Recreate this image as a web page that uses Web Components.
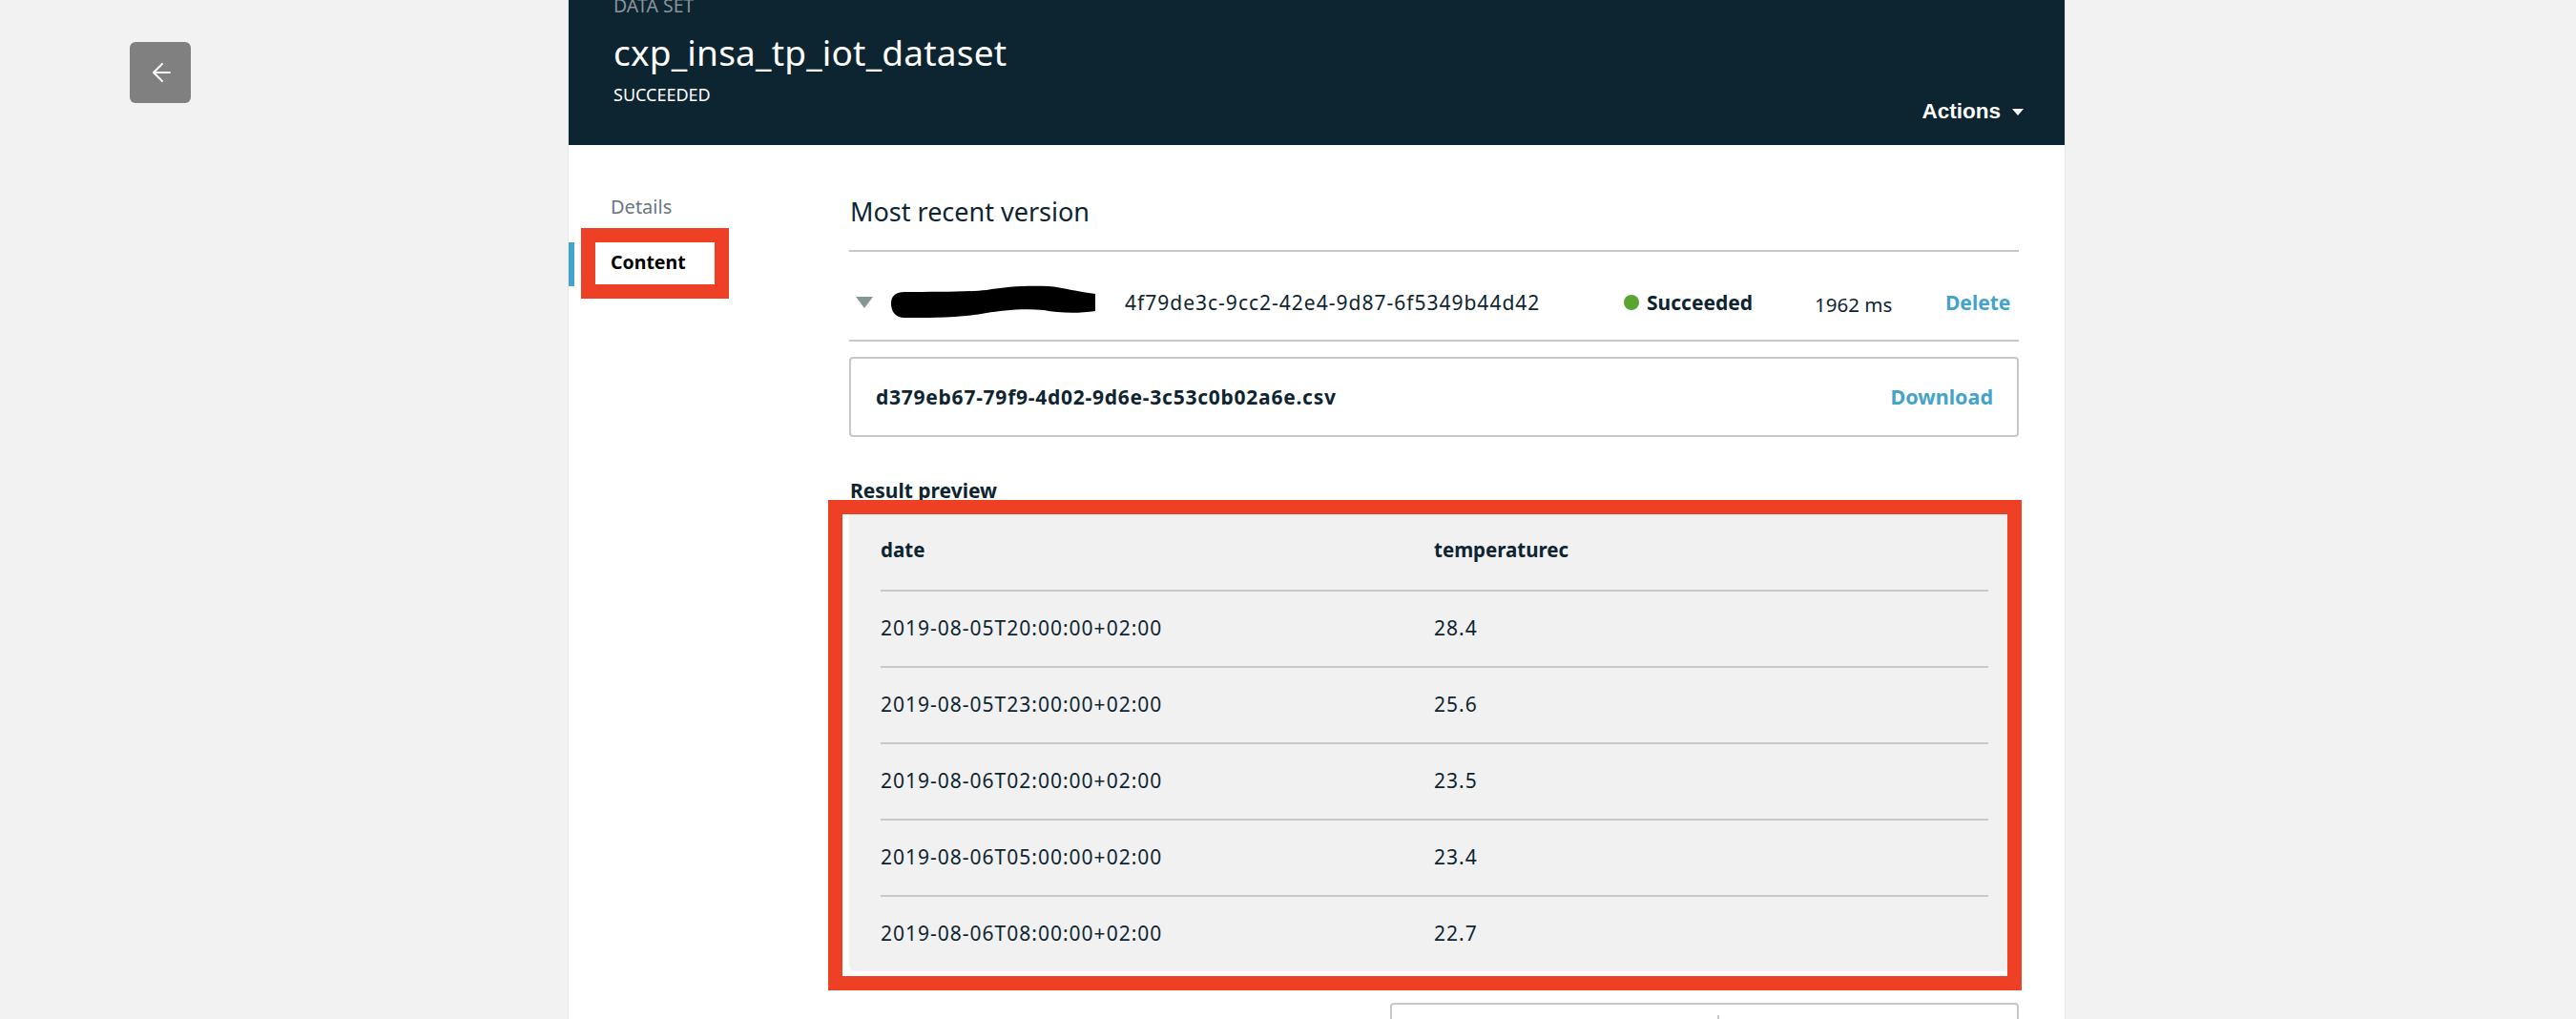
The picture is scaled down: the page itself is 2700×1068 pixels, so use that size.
<!DOCTYPE html>
<html>
<head>
<meta charset="utf-8">
<title>cxp_insa_tp_iot_dataset</title>
<style>
  html, body { margin: 0; height: 100%; overflow: hidden; background: #f2f2f2; }
  body { font-family: "Noto Sans", sans-serif; color: #0e2531; }
</style>
</head>
<body>
<dataset-page>
  <back-button slot="aside"></back-button>
  <dataset-header slot="header" label="DATA SET" name="cxp_insa_tp_iot_dataset" status="SUCCEEDED"></dataset-header>
  <side-nav slot="nav"></side-nav>
  <version-row version="4f79de3c-9cc2-42e4-9d87-6f5349b44d42" state="Succeeded" duration="1962 ms"></version-row>
  <file-row file="d379eb67-79f9-4d02-9d6e-3c53c0b02a6e.csv"></file-row>
  <result-table></result-table>
  <pager-box></pager-box>
</dataset-page>

<script>
// small helper, every element just sets its shadow markup once
class Base extends HTMLElement {
    constructor() {
        super();
        this.attachShadow({ mode: 'open' });
    }
    connectedCallback() {
        this.shadowRoot.innerHTML = this.render();
    }
}

class DatasetPage extends Base {
    render() {
        return `
            <style>
                :host { display: flex; align-items: flex-start; height: 1068px; overflow: hidden; }
                .aside { flex: 0 0 596px; }
                .panel { flex: 0 0 1568px; height: 1068px; background: #fff; box-shadow: 0 0 0 1px #e8e8e8; }
                .body { display: grid; grid-template-columns: 294px 1226px; }
                .main { padding-top: 52px; }
                h2 { margin: 0; height: 58px; font-size: 27px; line-height: 36px; font-weight: 400; padding-left: 1px; }
            </style>
            <div class="aside"><slot name="aside"></slot></div>
            <div class="panel">
                <slot name="header"></slot>
                <div class="body">
                    <slot name="nav"></slot>
                    <div class="main">
                        <h2>Most recent version</h2>
                        <slot></slot>
                    </div>
                </div>
            </div>
        `;
    }
}

class BackButton extends Base {
    render() {
        return `
            <style>
                :host { display: flex; align-items: center; justify-content: center; width: 64px; height: 64px; margin: 44px 0 0 136px; background: #808080; border-radius: 6px; }
                svg { display: block; margin-left: 2px; }
            </style>
            <svg width="20" height="22" viewBox="0 0 20 22" fill="none" stroke="#fff" stroke-width="2" stroke-linecap="round" stroke-linejoin="round">
                <path d="M19 11H2M11 2l-9 9 9 9"/>
            </svg>
        `;
    }
}

class DatasetHeader extends Base {
    render() {
        return `
            <style>
                :host { display: block; position: relative; height: 152px; overflow: hidden; background: #0c2531; color: #fff; padding-left: 47px; }
                .label { margin-top: -7px; font-size: 19.5px; line-height: 26px; color: #8a9499; }
                .name { margin-top: 14px; font-size: 37px; line-height: 44px; letter-spacing: 0.2px; }
                .status { margin-top: 9px; font-size: 18px; line-height: 26px; }
                .actions { position: absolute; right: 43px; bottom: 22px; display: flex; align-items: center; gap: 12px; font: 700 22.5px/26px "Liberation Sans", sans-serif; }
                .actions i { width: 0; height: 0; border: 6px solid transparent; border-top: 7px solid #fff; border-bottom: 0; }
            </style>
            <div class="label">${this.getAttribute('label')}</div>
            <div class="name">${this.getAttribute('name')}</div>
            <div class="status">${this.getAttribute('status')}</div>
            <div class="actions">Actions <i></i></div>
        `;
    }
}

class RedBox extends Base {
    render() {
        return `
            <style>
                :host { display: block; position: absolute; border: 15px solid #ed4025; pointer-events: none; }
            </style>
        `;
    }
}

class SideNav extends Base {
    render() {
        return `
            <style>
                :host { display: block; position: relative; height: 300px; font-size: 20px; }
                a { display: block; height: 46px; padding-left: 44px; box-sizing: border-box; }
                .details { margin-top: 42px; color: #6b7780; height: 60px; line-height: 46px; }
                .content { border-left: 6px solid #44a3c9; padding-left: 38px; font-size: 19.5px; line-height: 41px; font-weight: 700; color: #000; }
                red-box { left: 13px; top: 87px; width: 125px; height: 44px; }
            </style>
            <a class="details">Details</a>
            <a class="content">Content</a>
            <red-box></red-box>
        `;
    }
}

class VersionRow extends Base {
    render() {
        return `
            <style>
                :host { display: grid; box-sizing: border-box; grid-template-columns: 44px 245px 523px 200px 137px 1fr; align-items: center; height: 96px; padding-top: 13px; border-top: 2px solid #c8c8c8; border-bottom: 2px solid #c8c8c8; font-size: 20px; }
                .tri { width: 0; height: 0; margin-left: 7px; border: 9px solid transparent; border-top: 12px solid #879596; border-bottom: 0; }
                svg { display: block; margin-top: 1px; }
                .ver { font-size: 21px; letter-spacing: 1px; }
                .state { display: flex; align-items: center; gap: 8px; font-size: 21px; font-weight: 700; }
                .state i { width: 16px; height: 16px; border-radius: 50%; background: #5aa532; }
                .ms { margin-top: 4px; font-size: 20.5px; }
                .del { font-size: 21px; font-weight: 700; color: #44a3c9; }
            </style>
            <span class="tri"></span>
            <svg width="216" height="38" viewBox="0 0 216 38"><path d="M14 8C45 8 80 8 100 6 120 2 145 1 165 2 180 3 195 8 214 10V28C195 31 175 30 160 27 135 25 115 28 100 30 75 35 40 35 14 35 4 35 0 28 0 20 0 12 5 8 14 8Z"/></svg>
            <span class="ver">${this.getAttribute('version')}</span>
            <span class="state"><i></i>${this.getAttribute('state')}</span>
            <span class="ms">${this.getAttribute('duration')}</span>
            <span class="del">Delete</span>
        `;
    }
}

class FileRow extends Base {
    render() {
        return `
            <style>
                :host { display: flex; align-items: center; justify-content: space-between; box-sizing: border-box; height: 84px; margin-top: 16px; padding: 0 25px 1px 26px; border: 2px solid #c8c8c8; border-radius: 4px; font-size: 20px; font-weight: 700; }
                .name { font-size: 21px; letter-spacing: 0.75px; }
                a { color: #44a3c9; font-size: 21.5px; }
            </style>
            <span class="name">${this.getAttribute('file')}</span>
            <a>Download</a>
        `;
    }
}

class ResultTable extends Base {
    render() {
        const rows = [
            ['2019-08-05T20:00:00+02:00', '28.4'],
            ['2019-08-05T23:00:00+02:00', '25.6'],
            ['2019-08-06T02:00:00+02:00', '23.5'],
            ['2019-08-06T05:00:00+02:00', '23.4'],
            ['2019-08-06T08:00:00+02:00', '22.7'],
        ];
        return `
            <style>
                :host { display: block; margin-top: 42px; font-size: 20px; }
                .title { height: 39px; line-height: 29px; font-size: 21px; font-weight: 700; padding-left: 1px; }
                .wrap { position: relative; }
                .grid { box-sizing: border-box; height: 479px; padding: 0 32px 0 33px; background: #f1f1f1; border-radius: 0 0 0 6px; }
                .row { display: grid; box-sizing: border-box; grid-template-columns: 580px 1fr; align-items: center; height: 80px; padding-bottom: 2px; border-top: 2px solid #c8c8c8; }
                .row span { font-size: 21px; letter-spacing: 1px; }
                .row.head { height: 79px; padding-bottom: 5px; border-top: 0; font-weight: 700; }
                .row.head span { font-size: 20.5px; letter-spacing: 0; }
                red-box { left: -22px; top: -15px; right: -3px; bottom: -20px; }
            </style>
            <div class="title">Result preview</div>
            <div class="wrap">
                <div class="grid">
                    <div class="row head"><span>date</span><span>temperaturec</span></div>
                    ${rows.map(r => `<div class="row"><span>${r[0]}</span><span>${r[1]}</span></div>`).join('')}
                </div>
                <red-box></red-box>
            </div>
        `;
    }
}

class PagerBox extends Base {
    render() {
        return `
            <style>
                :host { display: flex; justify-content: center; box-sizing: border-box; width: 659px; height: 60px; margin: 33px 0 0 auto; padding-top: 11px; border: 2px solid #c8c8c8; border-radius: 4px; background: #fff; }
                i { width: 2px; height: 40px; background: #c8c8c8; margin-left: 29px; }
            </style>
            <i></i>
        `;
    }
}

customElements.define('red-box', RedBox);
customElements.define('dataset-page', DatasetPage);
customElements.define('back-button', BackButton);
customElements.define('dataset-header', DatasetHeader);
customElements.define('side-nav', SideNav);
customElements.define('version-row', VersionRow);
customElements.define('file-row', FileRow);
customElements.define('result-table', ResultTable);
customElements.define('pager-box', PagerBox);
</script>
</body>
</html>
